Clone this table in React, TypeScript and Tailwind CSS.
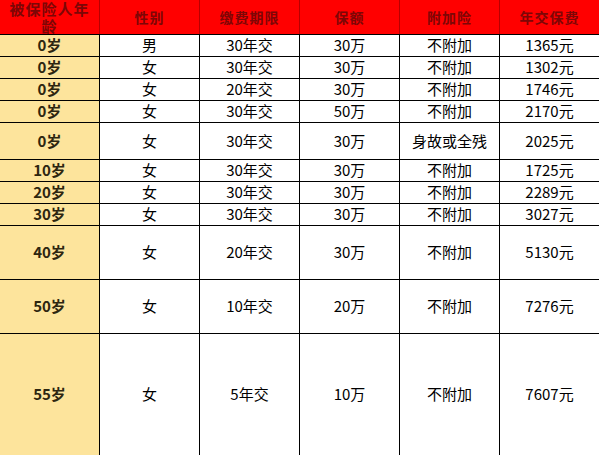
import React from "react";

type Row = { age: string; sex: string; term: string; amount: string; extra: string; fee: string; h: string };

const rows: Row[] = [
  { age: "0岁", sex: "男", term: "30年交", amount: "30万", extra: "不附加", fee: "1365元", h: "h-[22px]" },
  { age: "0岁", sex: "女", term: "30年交", amount: "30万", extra: "不附加", fee: "1302元", h: "h-[22px]" },
  { age: "0岁", sex: "女", term: "20年交", amount: "30万", extra: "不附加", fee: "1746元", h: "h-[22px]" },
  { age: "0岁", sex: "女", term: "30年交", amount: "50万", extra: "不附加", fee: "2170元", h: "h-[22px]" },
  { age: "0岁", sex: "女", term: "30年交", amount: "30万", extra: "身故或全残", fee: "2025元", h: "h-[37px]" },
  { age: "10岁", sex: "女", term: "30年交", amount: "30万", extra: "不附加", fee: "1725元", h: "h-[22px]" },
  { age: "20岁", sex: "女", term: "30年交", amount: "30万", extra: "不附加", fee: "2289元", h: "h-[22px]" },
  { age: "30岁", sex: "女", term: "30年交", amount: "30万", extra: "不附加", fee: "3027元", h: "h-[22px]" },
  { age: "40岁", sex: "女", term: "20年交", amount: "30万", extra: "不附加", fee: "5130元", h: "h-[54px]" },
  { age: "50岁", sex: "女", term: "10年交", amount: "20万", extra: "不附加", fee: "7276元", h: "h-[54px]" },
  { age: "55岁", sex: "女", term: "5年交", amount: "10万", extra: "不附加", fee: "7607元", h: "h-[122px]" },
];

const headers = ["性别", "缴费期限", "保额", "附加险", "年交保费"];

export default function App() {
  return (
    <div
      className="w-[599px] h-[455px] overflow-hidden bg-white text-[15px] text-black"
      style={{ fontFamily: '"Noto Sans CJK SC", "Noto Sans", sans-serif' }}
    >
      <div className="flex h-[35px] bg-[#ff0000] border-b border-black">
        <div className="w-[100px] shrink-0 border-r border-[#b80000] flex items-center justify-center text-center text-[15px] leading-[17px] font-bold text-[#7d0606] tracking-[1px]">
          被保险人年<br />龄
        </div>
        {headers.map((h, i) => (
          <div
            key={h}
            className={`${i === 4 ? "w-[99px]" : "w-[100px] border-r border-[#b80000]"} shrink-0 flex items-center justify-center font-bold text-[14px] text-[#7d0606] tracking-[1px]`}
          >
            {h}
          </div>
        ))}
      </div>
      {rows.map((r, idx) => (
        <div key={idx} className={`flex ${r.h} shrink-0 border-b border-black`}>
          <div className="w-[100px] shrink-0 bg-[#fde49c] border-r border-black flex items-center justify-center font-bold text-[#2e2610] text-[15px]">
            {r.age}
          </div>
          <div className="w-[100px] shrink-0 border-r border-black flex items-center justify-center">{r.sex}</div>
          <div className="w-[100px] shrink-0 border-r border-black flex items-center justify-center">{r.term}</div>
          <div className="w-[100px] shrink-0 border-r border-black flex items-center justify-center">{r.amount}</div>
          <div className="w-[100px] shrink-0 border-r border-black flex items-center justify-center">{r.extra}</div>
          <div className="w-[99px] shrink-0 flex items-center justify-center">{r.fee}</div>
        </div>
      ))}
    </div>
  );
}
